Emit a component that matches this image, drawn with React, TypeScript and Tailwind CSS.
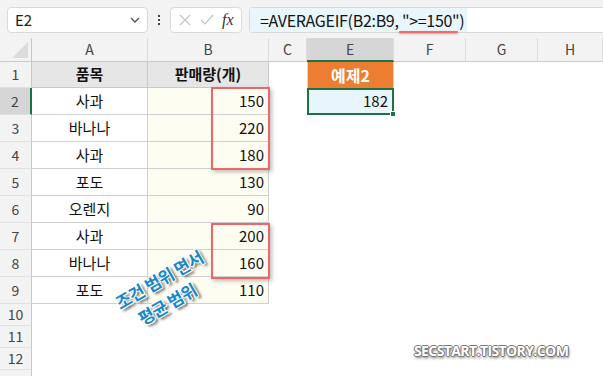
import React from "react";

const cols = ["A", "B", "C", "E", "F", "G", "H"];

const data: [string, string][] = [
  ["사과", "150"],
  ["바나나", "220"],
  ["사과", "180"],
  ["포도", "130"],
  ["오렌지", "90"],
  ["사과", "200"],
  ["바나나", "160"],
  ["포도", "110"],
];

const font = "font-['Noto_Sans_CJK_KR','Noto_Sans',sans-serif]";

function RowHead({ n, h, active }: { n?: number; h: string; active?: boolean }) {
  return (
    <div
      className={`${h} flex items-center justify-center border-b border-[#e1e1e1] text-[14px] text-[#444] ${
        active ? "bg-[#d6d6d6] border-r-2 border-r-[#1e7145]" : "bg-[#f3f3f3] border-r border-r-[#c8c8c8]"
      }`}
    >
      {n}
    </div>
  );
}

export default function App() {
  return (
    <div className={`relative w-[603px] h-[376px] overflow-hidden bg-white ${font}`}>
      {/* toolbar */}
      <div className="h-[38px] bg-[#f3f3f3] flex items-start pt-[7px] pl-[7px] gap-[7px]">
        <div className="w-[141px] h-[26px] bg-white border border-[#dadada] rounded-[4px] flex items-center justify-between pl-[7px] pr-[6px] text-[15px] text-[#222]">
          <span>E2</span>
          <svg width="12" height="8" viewBox="0 0 12 8">
            <path d="M2 2 L6 6 L10 2" fill="none" stroke="#555" strokeWidth="1.3" />
          </svg>
        </div>
        <div className="w-[8px] h-[26px] flex flex-col items-center justify-center gap-[2px]">
          <div className="w-[2px] h-[2px] bg-[#444]" />
          <div className="w-[2px] h-[2px] bg-[#444]" />
          <div className="w-[2px] h-[2px] bg-[#444]" />
        </div>
        <div className="w-[72px] h-[26px] bg-white border border-[#dadada] rounded-[4px] flex items-center justify-around px-[4px]">
          <svg width="14" height="14" viewBox="0 0 14 14">
            <path d="M2 2 L12 12 M12 2 L2 12" stroke="#c4c4c4" strokeWidth="1.2" />
          </svg>
          <svg width="16" height="14" viewBox="0 0 16 14">
            <path d="M2 7 L6 11 L14 2" fill="none" stroke="#c4c4c4" strokeWidth="1.2" />
          </svg>
          <span className="font-['Liberation_Serif',serif] italic text-[16px] text-[#333] leading-none">
            fx
          </span>
        </div>
        <div className="relative flex-1 h-[26px] bg-white border border-[#dadada] rounded-l-[4px] border-r-0 flex items-center">
          <div className="h-full w-[217px] bg-[#e9f6fb] flex items-center pl-[10px] text-[16px] text-[#111] tracking-[-0.3px] whitespace-nowrap">
            =AVERAGEIF(B2:B9, "&gt;=150")
          </div>
          <div className="absolute left-[149px] top-[23px] w-[59px] h-[2px] rounded-full bg-[#f06b6b] shadow-[0_1px_2px_rgba(0,0,0,0.3)]" />
        </div>
      </div>

      {/* sheet */}
      <div className="grid grid-cols-[32px_116px_121px_38px_87px_72px_72px_65px] text-[15px] text-[#111]">
        {/* column headers */}
        <div className="h-[24px] bg-[#f3f3f3] border-b border-r border-[#c8c8c8] flex items-end justify-end p-[3px]">
          <div className="w-0 h-0 border-l-[16px] border-l-transparent border-b-[16px] border-b-[#dcdcdc]" />
        </div>
        {cols.map((c) => (
          <div
            key={c}
            className={`h-[24px] flex items-center justify-center text-[14px] text-[#444] border-r border-[#dcdcdc] ${
              c === "E"
                ? "bg-[#d6d6d6] border-b-2 border-b-[#1e7145]"
                : "bg-[#f3f3f3] border-b border-b-[#c8c8c8]"
            }`}
          >
            {c}
          </div>
        ))}

        {/* row 1 */}
        <RowHead n={1} h="h-[26px]" />
        <div className="h-[26px] bg-[#e7e6e6] border-r border-b border-[#c9c9c9] flex items-center justify-center font-bold">
          품목
        </div>
        <div className="h-[26px] bg-[#e7e6e6] border-r border-b border-[#c9c9c9] flex items-center justify-center font-bold">
          판매량(개)
        </div>
        <div />
        <div className="h-[26px] bg-[#ed7d31] flex items-center justify-center text-white font-bold text-[16px] border-x border-[#d8d8d8]">
          예제2
        </div>
        <div />
        <div />
        <div />

        {data.map(([name, qty], i) => (
          <React.Fragment key={i}>
            <RowHead n={i + 2} h="h-[27px]" active={i === 0} />
            <div className="h-[27px] border-r border-b border-[#d0d0d0] flex items-center justify-center">
              {name}
            </div>
            <div className="h-[27px] bg-[#fefdf1] border-r border-b border-[#d0d0d0] flex items-center justify-end pr-[4px]">
              {qty}
            </div>
            <div />
            {i === 0 ? (
              <div className="relative h-[27px] bg-[#e6f6fc] border-2 border-[#1e7145] flex items-center justify-end pr-[4px]">
                182
                <div className="absolute -right-[4px] -bottom-[4px] w-[6px] h-[6px] bg-[#1e7145] border border-white" />
              </div>
            ) : (
              <div />
            )}
            <div />
            <div />
            <div />
          </React.Fragment>
        ))}

        {[10, 11, 12].map((n) => (
          <React.Fragment key={n}>
            <RowHead n={n} h="h-[22px]" />
            <div />
            <div />
            <div />
            <div />
            <div />
            <div />
            <div />
          </React.Fragment>
        ))}
        <RowHead h="h-[22px]" />
      </div>

      {/* red highlight boxes */}
      <div className="absolute left-[211px] top-[87px] w-[59px] h-[83px] border-2 border-[#f06666] shadow-[2px_2px_4px_rgba(0,0,0,0.25)]" />
      <div className="absolute left-[211px] top-[223px] w-[59px] h-[56px] border-2 border-[#f06666] shadow-[2px_2px_4px_rgba(0,0,0,0.25)]" />

      {/* annotation */}
      <div className="absolute left-[100px] top-[265px] w-[130px] rotate-[-30deg] flex flex-col items-center leading-[25px] font-bold text-[17px] tracking-[-0.5px] text-[#1787c9] [text-shadow:1px_0_0_#fff,-1px_0_0_#fff,0_1px_0_#fff,0_-1px_0_#fff,1px_1px_0_#fff,-1px_-1px_0_#fff,2px_3px_3px_rgba(0,0,0,0.75)]">
        <span>조건 범위 면서</span>
        <span className="-ml-[10px]">평균 범위</span>
      </div>

      {/* watermark */}
      <div className="absolute left-[414px] top-[340px] font-['Open_Sans',sans-serif] font-bold text-[14px] tracking-[-0.6px] text-white [text-shadow:1px_0_0_#777,-1px_0_0_#777,0_1px_0_#777,0_-1px_0_#777,1px_2px_3px_rgba(0,0,0,0.6)]">
        SECSTART.TISTORY.COM
      </div>
    </div>
  );
}
